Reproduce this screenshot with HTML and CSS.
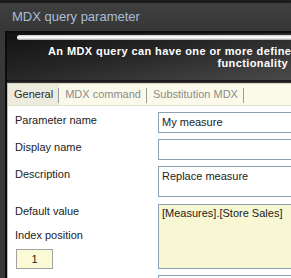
FILE: index.html
```html
<!DOCTYPE html>
<html lang="en">
<head>
    <meta charset="UTF-8">
    <title>MDX query parameter</title>
    <link rel="stylesheet" href="styles.css">
</head>
<body>
    <div class="window">
        <div class="titlebar">MDX query parameter</div>
        <div class="frame">
            <div class="banner">
                <div class="gloss"></div>
                <div class="banner-line1">An MDX query can have one or more define</div>
                <div class="banner-line2">functionality</div>
            </div>
            <div class="panel">
                <!-- タブ -->
                <div class="tabs">
                    <div class="tab active">General</div>
                    <div class="tab">MDX command</div>
                    <div class="tab">Substitution MDX</div>
                </div>
                <!-- フォーム -->
                <div class="form">
                    <div class="row">
                        <div class="label">Parameter name</div>
                        <div class="field">My measure</div>
                    </div>
                    <div class="row">
                        <div class="label">Display name</div>
                        <div class="field"></div>
                    </div>
                    <div class="row">
                        <div class="label">Description</div>
                        <div class="field tall">Replace measure</div>
                    </div>
                    <div class="row">
                        <div class="label-col">
                            <div class="label">Default value</div>
                            <div class="label">Index position</div>
                            <div class="index-box">1</div>
                        </div>
                        <div class="field value">[Measures].[Store Sales]</div>
                    </div>
                    <div class="row">
                        <div class="label"></div>
                        <div class="field"></div>
                    </div>
                </div>
            </div>
        </div>
    </div>
</body>
</html>
```

FILE: styles.css
```css
body {
    margin: 0;
    font-family: "Liberation Sans", Arial, sans-serif;
    font-size: 11px;
    background: #2f2f2f;
    overflow: hidden;
}
.window {
    width: 291px;
    height: 278px;
    overflow: hidden;
    background: #383838;
}
.titlebar {
    height: 28px;
    line-height: 28px;
    border-top: 3px solid #1c1c1c;
    padding-left: 12px;
    font-size: 13px;
    color: #a9bed6;
    background: linear-gradient(#404040, #363636);
}
.frame {
    margin-left: 5px;
    border-left: 2px solid #0c0c0c;
}
.banner {
    height: 47px;
    border-top: 2px solid #0e0e0e;
    border-bottom: 2px solid #1a1a1a;
    background: linear-gradient(170deg, #121212 0%, #262626 45%, #4a4a4a 100%);
    color: white;
    font-weight: bold;
    font-size: 11px;
    letter-spacing: 0.4px;
    white-space: nowrap;
    overflow: hidden;
}
.gloss {
    margin: 2px 0 0 10px;
    height: 5px;
    border-radius: 3px 0 0 3px;
    background: linear-gradient(#cfcfcf, #ffffff 50%, #a8a8a8);
}
.banner-line1 {
    margin-top: 5px;
    padding-left: 41px;
    line-height: 12px;
}
.banner-line2 {
    text-align: right;
    padding-right: 3px;
    line-height: 12px;
}
.panel {
    border-left: 1px solid #bdbdbd;
    background: white;
    height: 200px;
}
.tabs {
    display: flex;
    height: 21px;
    margin-top: 1px;
    border-top: 1px solid #d6d3c0;
    border-bottom: 1px solid #e4e1cc;
    background: #fbf9e9;
    overflow: hidden;
}
.tab {
    padding: 0 6px;
    line-height: 21px;
    color: #8b8b8b;
    position: relative;
}
.tab::after {
    content: "";
    position: absolute;
    right: 0;
    top: 4px;
    bottom: 2px;
    border-right: 1px solid #9a9a9a;
}
.tab.active {
    background: #ecebdd;
    color: #2a2a2a;
}
.form {
    padding-top: 6px;
    display: flex;
    flex-direction: column;
    gap: 6px;
}
.row {
    display: flex;
}
.label-col {
    width: 150px;
    flex: none;
}
.label {
    width: 143px;
    flex: none;
    padding-left: 7px;
    padding-top: 2px;
    line-height: 13px;
    color: #222;
}
.label-col .label {
    margin-bottom: 9px;
}
.field {
    width: 160px;
    flex: none;
    height: 19px;
    line-height: 19px;
    border: 1px solid #8a9fb8;
    padding-left: 3px;
    color: #222;
    background: white;
}
.field.tall {
    height: 29px;
    line-height: 18px;
}
.field.value {
    height: 63px;
    line-height: 16px;
    margin-top: 1px;
    background: #f8f7d4;
}
.index-box {
    width: 35px;
    height: 18px;
    line-height: 18px;
    margin: -2px 0 0 8px;
    border: 1px solid #a3a3a3;
    background: #fbfad6;
    text-align: center;
    color: #222;
}
```
